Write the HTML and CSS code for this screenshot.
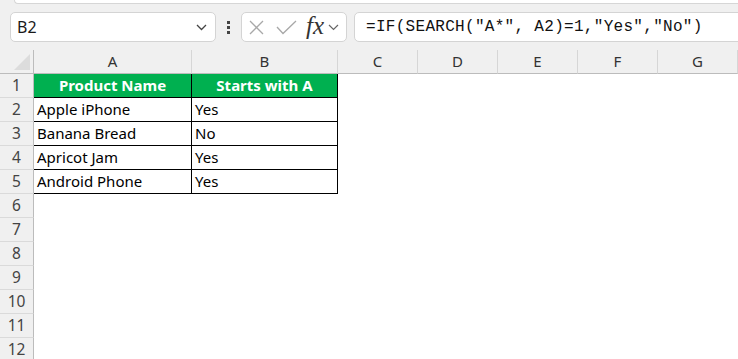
FILE: index.html
```html
<!DOCTYPE html>
<html lang="en">
<head>
    <meta charset="UTF-8">
    <meta name="viewport" content="width=device-width, initial-scale=1.0">
    <title>Starts with A</title>
    <link rel="stylesheet" href="styles.css">
</head>
<body>
    <div class="top-strip"></div>

    <div class="formula-bar">
        <div class="name-box">
            <span class="cell-ref">B2</span>
            <svg class="chevron" width="11" height="7" viewBox="0 0 11 7"><polyline points="1,1 5.5,5.5 10,1" fill="none" stroke="#444" stroke-width="1.3"/></svg>
        </div>
        <div class="dots"><span></span><span></span><span></span></div>
        <div class="fx-box">
            <svg class="icon-x" width="15" height="15" viewBox="0 0 15 15"><path d="M1 1 L14 14 M14 1 L1 14" stroke="#a8a8a8" stroke-width="1.3" fill="none"/></svg>
            <svg class="icon-check" width="21" height="15" viewBox="0 0 21 15"><polyline points="1,7 7,13.5 20,1" fill="none" stroke="#a8a8a8" stroke-width="1.3"/></svg>
            <span class="fx">fx</span>
            <svg class="chevron" width="11" height="7" viewBox="0 0 11 7"><polyline points="1,1 5.5,5.5 10,1" fill="none" stroke="#666" stroke-width="1.2"/></svg>
        </div>
        <div class="formula-input">=IF(SEARCH("A*", A2)=1,"Yes","No")</div>
    </div>

    <div class="sheet">
        <div class="row head-row">
            <div class="corner"><span class="corner-tri"></span></div>
            <div class="col-head">A</div>
            <div class="col-head">B</div>
            <div class="col-head">C</div>
            <div class="col-head">D</div>
            <div class="col-head">E</div>
            <div class="col-head">F</div>
            <div class="col-head">G</div>
        </div>
        <div class="row">
            <div class="row-head">1</div>
            <div class="cell title">Product Name</div>
            <div class="cell title">Starts with A</div>
        </div>
        <div class="row">
            <div class="row-head">2</div>
            <div class="cell">Apple iPhone</div>
            <div class="cell">Yes</div>
        </div>
        <div class="row">
            <div class="row-head">3</div>
            <div class="cell">Banana Bread</div>
            <div class="cell">No</div>
        </div>
        <div class="row">
            <div class="row-head">4</div>
            <div class="cell">Apricot Jam</div>
            <div class="cell">Yes</div>
        </div>
        <div class="row">
            <div class="row-head">5</div>
            <div class="cell">Android Phone</div>
            <div class="cell">Yes</div>
        </div>
        <div class="row"><div class="row-head">6</div></div>
        <div class="row"><div class="row-head">7</div></div>
        <div class="row"><div class="row-head">8</div></div>
        <div class="row"><div class="row-head">9</div></div>
        <div class="row"><div class="row-head">10</div></div>
        <div class="row"><div class="row-head">11</div></div>
        <div class="row"><div class="row-head">12</div></div>
    </div>
</body>
</html>
```

FILE: styles.css
```css
body {
    margin: 0;
    padding: 0;
    background: #f0f0f0;
    font-family: "Noto Sans", Arial, sans-serif;
    color: #000;
    overflow: hidden;
}
.top-strip {
    height: 3px;
    margin-left: 14px;
    background: white;
    border-bottom: 1px solid #d6d6d6;
    border-left: 1px solid #d6d6d6;
    border-bottom-left-radius: 6px;
}
.formula-bar {
    display: flex;
    align-items: center;
    height: 30px;
    margin-top: 8px;
    padding-left: 10px;
}
.name-box, .fx-box, .formula-input {
    box-sizing: border-box;
    height: 30px;
    background: white;
    border: 1px solid #d4d4d4;
    border-radius: 5px;
    display: flex;
    align-items: center;
}
.name-box {
    width: 206px;
    padding: 0 8px 0 6px;
    justify-content: space-between;
}
.cell-ref {
    font-size: 16px;
    color: #1a1a1a;
}
.dots {
    display: flex;
    flex-direction: column;
    gap: 2px;
    margin: 0 11px 0 11px;
}
.dots span {
    width: 3px;
    height: 3px;
    background: #444;
}
.fx-box {
    width: 106px;
    padding-left: 7px;
}
.icon-x {
    margin-right: 12px;
}
.icon-check {
    margin-right: 9px;
}
.fx {
    font-family: "Liberation Serif", serif;
    font-style: italic;
    font-size: 25px;
    color: #333;
    line-height: 1;
    margin-top: -4px;
    margin-right: 4px;
}
.formula-input {
    flex: 1;
    margin-left: 7px;
    margin-right: -10px;
    padding-left: 11px;
    font-family: "Liberation Mono", monospace;
    font-size: 16px;
    letter-spacing: 0.3px;
    color: #111;
    border-top-right-radius: 0;
    border-bottom-right-radius: 0;
}
.sheet {
    margin-top: 8px;
    background: white;
}
.row {
    display: grid;
    grid-template-columns: 34px 158px 146px repeat(5, 80px);
    height: 24px;
}
.head-row div {
    box-sizing: border-box;
    background: #f0f0f0;
    border-bottom: 1px solid #bcbcbc;
}
.corner {
    position: relative;
    border-right: 1px solid #bcbcbc;
}
.corner-tri {
    position: absolute;
    right: 3px;
    bottom: 3px;
    width: 0;
    height: 0;
    border-left: 16px solid transparent;
    border-bottom: 16px solid #dcdcdc;
}
.col-head {
    border-right: 1px solid #d6d6d6;
    text-align: center;
    font-size: 15px;
    line-height: 23px;
    color: #333;
}
.row-head {
    box-sizing: border-box;
    background: #f0f0f0;
    border-right: 1px solid #bcbcbc;
    border-bottom: 1px solid #dadada;
    text-align: center;
    font-size: 15.5px;
    line-height: 23px;
    color: #444;
}
.cell {
    box-sizing: border-box;
    border-right: 1px solid #000;
    border-bottom: 1px solid #000;
    padding-left: 3px;
    font-size: 15px;
    line-height: 23px;
    white-space: nowrap;
}
.title {
    background: #00b050;
    color: white;
    font-weight: bold;
    text-align: center;
    padding-left: 0;
}
```
